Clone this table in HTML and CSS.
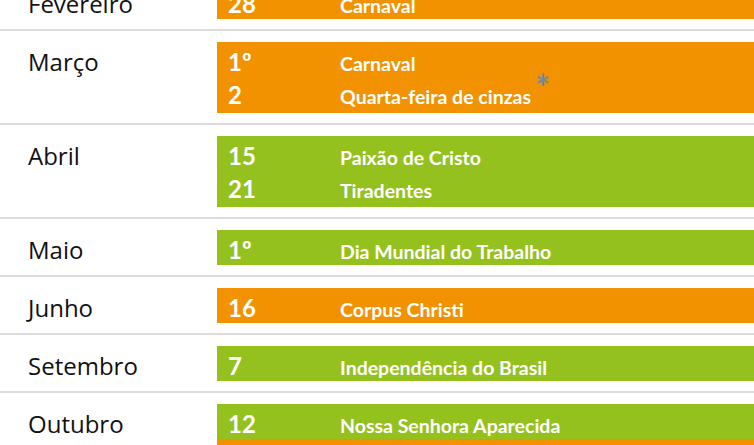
FILE: index.html
```html
<!DOCTYPE html>
<html lang="pt-BR">
<head>
<meta charset="utf-8">
<title>Feriados</title>
<link rel="stylesheet" href="styles.css">
</head>
<body>
<div class="table">
  <div class="row">
    <div class="month">Fevereiro</div>
    <div class="bar">
      <div class="entry orange"><span class="day">28</span><span class="name">Carnaval</span></div>
    </div>
  </div>
  <div class="row">
    <div class="month">Março</div>
    <div class="bar">
      <div class="entry orange"><span class="day">1º</span><span class="name">Carnaval</span></div>
      <div class="entry orange"><span class="day">2</span><span class="name">Quarta-feira de cinzas<sup class="star">*</sup></span></div>
    </div>
  </div>
  <div class="row">
    <div class="month">Abril</div>
    <div class="bar">
      <div class="entry green"><span class="day">15</span><span class="name">Paixão de Cristo</span></div>
      <div class="entry green"><span class="day">21</span><span class="name">Tiradentes</span></div>
    </div>
  </div>
  <div class="row">
    <div class="month">Maio</div>
    <div class="bar">
      <div class="entry green"><span class="day">1º</span><span class="name">Dia Mundial do Trabalho</span></div>
    </div>
  </div>
  <div class="row">
    <div class="month">Junho</div>
    <div class="bar">
      <div class="entry orange"><span class="day">16</span><span class="name">Corpus Christi</span></div>
    </div>
  </div>
  <div class="row">
    <div class="month">Setembro</div>
    <div class="bar">
      <div class="entry green"><span class="day">7</span><span class="name">Independência do Brasil</span></div>
    </div>
  </div>
  <div class="row">
    <div class="month">Outubro</div>
    <div class="bar">
      <div class="entry green"><span class="day">12</span><span class="name">Nossa Senhora Aparecida</span></div>
      <div class="entry orange"><span class="day">15</span><span class="name">Dia do Professor</span></div>
    </div>
  </div>
</div>
</body>
</html>
```
FILE: styles.css
```css
html, body {
  margin: 0;
  padding: 0;
  background: #fff;
  overflow: hidden;
}
.table {
  margin-top: -27px;
  width: 754px;
}
.row {
  display: flex;
  align-items: flex-start;
  padding: 11px 0 10px;
  border-bottom: 2px solid #dcdcdc;
}
.month {
  width: 189px;
  height: 33px;
  padding-left: 28px;
  padding-top: 2px;
  font-family: "Open Sans", sans-serif;
  font-size: 24px;
  line-height: 35px;
  color: #111;
  flex: none;
}
.bar {
  flex: 1;
  display: flex;
  flex-direction: column;
}
.entry {
  display: flex;
  align-items: flex-start;
  height: 33px;
  overflow: visible;
  color: #fff;
  font-family: "Lato", sans-serif;
  font-weight: bold;
}
.entry:first-child {
  padding-top: 2px;
}
.entry + .entry {
  padding-bottom: 3px;
}
.orange { background: #f29200; }
.green { background: #95c11f; }
.day {
  width: 112px;
  padding-left: 11px;
  font-size: 24px;
  line-height: 35px;
  flex: none;
}
.name {
  font-size: 19.5px;
  line-height: 39px;
  white-space: nowrap;
}
.star {
  font-family: "Lato", sans-serif;
  font-weight: bold;
  color: #7b8794;
  font-size: 36px;
  line-height: 0;
  vertical-align: 3px;
  margin-left: 4px;
}
```
